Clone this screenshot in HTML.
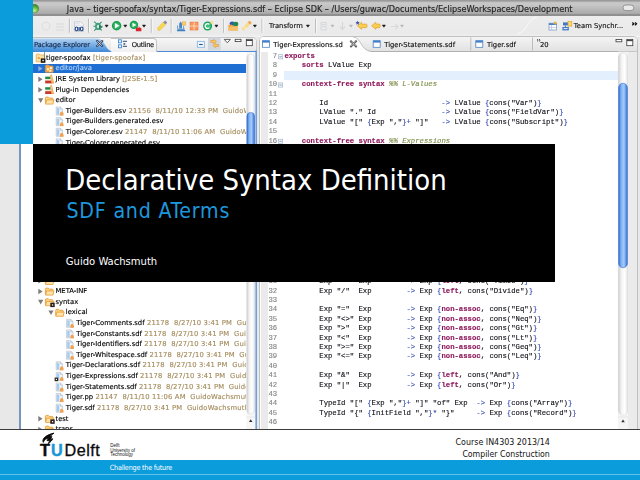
<!DOCTYPE html>
<html lang="en"><head><meta charset="utf-8"><title>Declarative Syntax Definition</title>
<style>
html,body{margin:0;padding:0}
body{width:640px;height:480px;overflow:hidden;position:relative;background:#fff;font-family:"DejaVu Sans","Liberation Sans",sans-serif;}
div,span,svg{position:absolute;box-sizing:border-box}
#shot .row,#shot .tt,#titletext{-webkit-text-stroke:0.14px currentColor}
#shot .cl,#shot .ln{-webkit-text-stroke:0.14px currentColor}
#shot{left:0;top:0;width:640px;height:430px;overflow:hidden;background:#e8e8e8;filter:blur(0.4px)}
#titlebar{left:0;top:0;width:640px;height:15.5px;background:linear-gradient(#999 0,#9b9b9b 7%,#c2c2c2 13%,#c9c9c9 25%,#ababab 84%,#919191 88%,#8e8e8e 100%)}
#titletext{left:66.8px;top:3.8px;font-size:8.13px;line-height:11px;color:#222;white-space:pre;letter-spacing:0px}
#toolbar{left:0;top:15.5px;width:640px;height:21px;background:linear-gradient(#ededed,#eaeaea 85%,#f2f2f2)}
.tt{font-size:6.8px;line-height:10px;color:#111;white-space:pre}
#pe{left:18.8px;top:36.5px;width:238px;height:400px;background:#fff;border:1px solid #c2c2c2;border-left:2px solid #7596be;border-right:1.3px solid #c6c6c6;border-radius:4px 5px 0 0;overflow:hidden}
#pehead{left:0;top:0;width:236px;height:14.5px;background:linear-gradient(#f6f6f6,#e6e6e6);border-bottom:1.9px solid #4b8bd6}
#petab{left:0;top:0;width:100px;height:14.5px}
#tree{left:0;top:14.5px;width:225.6px;height:390px;overflow:hidden}
.row{left:0;height:10.67px;width:400px;white-space:pre;font-size:6.8px;line-height:10.67px;color:#000}
.row .t{top:0;white-space:pre}
.dec{color:#a58d5e;letter-spacing:0.16px}
.sel{left:0;width:224.8px;height:9.4px;background:#1f6fd3}
#ed{left:259px;top:36.4px;width:379px;height:400px;background:#fff;border:1px solid #c0c0c0;border-radius:5px 5px 0 0;overflow:hidden}
#edhead{left:0;top:0;width:378px;height:14.5px;background:linear-gradient(#f4f4f4,#e2e2e2);border-bottom:1px solid #b0b0b0}
#code{left:0;top:14.5px;width:358px;height:380px;overflow:hidden}
.ln{left:0;width:17.2px;text-align:right;color:#868686;font-family:"Liberation Mono","DejaVu Sans Mono",monospace;font-size:7.28px;line-height:9.385px;height:9.385px;white-space:pre}
.cl{left:24.4px;color:#101018;font-family:"Liberation Mono","DejaVu Sans Mono",monospace;font-size:7.28px;line-height:9.385px;height:9.385px;white-space:pre}
.k{color:#8e1a5c;font-weight:bold;position:static}
.o{color:#3a4fb8;position:static}
.c{color:#7f8f4a;font-style:italic;position:static}
#strip{left:0;top:0;width:33.2px;height:143.8px;background:#0b9cdc}
#box{left:33.2px;top:143.8px;width:522px;height:138.4px;background:#000}
#ttl{left:65.2px;top:159.7px;font-family:"DejaVu Sans Condensed","Liberation Sans",sans-serif;font-size:28.93px;line-height:40px;color:#fff;white-space:pre}
#sub{left:66.5px;top:195.8px;font-family:"DejaVu Sans Condensed","Liberation Sans",sans-serif;font-size:21.2px;line-height:30px;color:#1e97de;white-space:pre;letter-spacing:0.77px}
#auth{left:65.8px;top:252.9px;font-family:"DejaVu Sans Condensed","Liberation Sans",sans-serif;font-size:11.15px;line-height:18px;color:#fff;white-space:pre}
#foot{left:0;top:429px;width:640px;height:51px;background:#fff;border-top:1px solid #3c3c3c}
#band{left:0;top:460.3px;width:640px;height:19.7px;background:#0b9cdc}
#bandline{left:0;top:473.9px;width:640px;height:1px;background:#63c0ec}
#ctf{left:109.8px;top:462.9px;font-family:"DejaVu Sans Condensed","Liberation Sans",sans-serif;font-size:7.2px;line-height:9px;letter-spacing:-0.22px;color:#fff;white-space:pre}
.fr{right:90.2px;font-family:"DejaVu Sans Condensed","Liberation Sans",sans-serif;line-height:12px;color:#111;white-space:pre;text-align:right}
</style></head>
<body>
<div id="shot">
<div id="titlebar"></div>
<div id="titletext">Java – tiger-spoofax/syntax/Tiger-Expressions.sdf – Eclipse SDK – /Users/guwac/Documents/EclipseWorkspaces/Development</div>
<div id="toolbar"></div>
<div class="tt" style="left:269px;top:20.5px">Transform</div>
<div class="tt" style="left:573.8px;top:20.5px">Team Synchr...</div>
<div id="pe">
<div id="pehead"></div>
<div style="left:90px;top:0.5px;width:46.5px;height:14px;background:linear-gradient(#fdfdfd,#f0f0f0);border:1px solid #c4c4c4;border-bottom:none;border-left:none;border-radius:0 4px 0 0"></div>
<svg id="petab" width="110" height="15" viewBox="0 0 110 15"><defs><linearGradient id="g1" x1="0" y1="0" x2="0" y2="1"><stop offset="0" stop-color="#b4d2f2"/><stop offset="1" stop-color="#3f8bd9"/></linearGradient></defs><path d="M0 0 H84 C92.5 0 92.5 14.5 102 14.5 H0 Z" fill="url(#g1)"/></svg>
<div class="tt" style="left:13.2px;top:2.4px;color:#16294a;letter-spacing:-0.17px">Package Explorer</div>
<div class="tt" style="left:111px;top:2.4px;color:#111;letter-spacing:-0.35px">Outline</div>
<div id="tree">
<div class="row" style="top:0.69px"><span class="t" style="left:25.2px"><span style="position:static">tiger-spoofax</span><span class="dec" style="position:static"> [tiger-spoofax]</span></span></div>
<div class="sel" style="top:11.56px"></div>
<div class="row" style="top:11.31px"><span class="t" style="left:34.7px"><span style="position:static;color:#b4d3f7">editor/java</span></span></div>
<div class="row" style="top:21.92px"><span class="t" style="left:34.7px"><span style="position:static">JRE System Library</span><span class="dec" style="position:static"> [J2SE-1.5]</span></span></div>
<div class="row" style="top:32.53px"><span class="t" style="left:34.7px"><span style="position:static">Plug-in Dependencies</span></span></div>
<div class="row" style="top:43.15px"><span class="t" style="left:34.7px"><span style="position:static">editor</span></span></div>
<div class="row" style="top:53.76px"><span class="t" style="left:45.0px"><span style="position:static">Tiger-Builders.esv</span><span class="dec" style="position:static"> 21156  8/11/10 12:33 PM  GuidoWachsmuth</span></span></div>
<div class="row" style="top:64.37px"><span class="t" style="left:45.0px"><span style="position:static">Tiger-Builders.generated.esv</span></span></div>
<div class="row" style="top:74.98px"><span class="t" style="left:45.0px"><span style="position:static">Tiger-Colorer.esv</span><span class="dec" style="position:static"> 21147  8/11/10 11:06 AM  GuidoWachsmuth</span></span></div>
<div class="row" style="top:85.60px"><span class="t" style="left:45.0px"><span style="position:static">Tiger-Colorer.generated.esv</span></span></div>
<div class="row" style="top:223.57px"><span class="t" style="left:34.7px"><span style="position:static"></span></span></div>
<div class="row" style="top:234.18px"><span class="t" style="left:34.7px"><span style="position:static">META-INF</span></span></div>
<div class="row" style="top:244.79px"><span class="t" style="left:34.7px"><span style="position:static">syntax</span></span></div>
<div class="row" style="top:255.41px"><span class="t" style="left:45.0px"><span style="position:static">lexical</span></span></div>
<div class="row" style="top:266.02px"><span class="t" style="left:55.4px"><span style="position:static">Tiger-Comments.sdf</span><span class="dec" style="position:static"> 21178  8/27/10 3:41 PM  GuidoWachsmuth</span></span></div>
<div class="row" style="top:276.63px"><span class="t" style="left:55.4px"><span style="position:static">Tiger-Constants.sdf</span><span class="dec" style="position:static"> 21178  8/27/10 3:41 PM  GuidoWachsmuth</span></span></div>
<div class="row" style="top:287.24px"><span class="t" style="left:55.4px"><span style="position:static">Tiger-Identifiers.sdf</span><span class="dec" style="position:static"> 21178  8/27/10 3:41 PM  GuidoWachsmuth</span></span></div>
<div class="row" style="top:297.86px"><span class="t" style="left:55.4px"><span style="position:static">Tiger-Whitespace.sdf</span><span class="dec" style="position:static"> 21178  8/27/10 3:41 PM  GuidoWachsmuth</span></span></div>
<div class="row" style="top:308.47px"><span class="t" style="left:45.0px"><span style="position:static">Tiger-Declarations.sdf</span><span class="dec" style="position:static"> 21178  8/27/10 3:41 PM  GuidoWachsmuth</span></span></div>
<div class="row" style="top:319.08px"><span class="t" style="left:45.0px"><span style="position:static">Tiger-Expressions.sdf</span><span class="dec" style="position:static"> 21178  8/27/10 3:41 PM  GuidoWachsmuth</span></span></div>
<div class="row" style="top:329.70px"><span class="t" style="left:45.0px"><span style="position:static">Tiger-Statements.sdf</span><span class="dec" style="position:static"> 21178  8/27/10 3:41 PM  GuidoWachsmuth</span></span></div>
<div class="row" style="top:340.31px"><span class="t" style="left:45.0px"><span style="position:static">Tiger.pp</span><span class="dec" style="position:static"> 21147  8/11/10 11:06 AM  GuidoWachsmuth</span></span></div>
<div class="row" style="top:350.92px"><span class="t" style="left:45.0px"><span style="position:static">Tiger.sdf</span><span class="dec" style="position:static"> 21178  8/27/10 3:41 PM  GuidoWachsmuth</span></span></div>
<div class="row" style="top:361.54px"><span class="t" style="left:34.7px"><span style="position:static">test</span></span></div>
<div class="row" style="top:372.15px"><span class="t" style="left:34.7px"><span style="position:static">trans</span></span></div>
</div>
</div>
<div id="ed">
<div id="edhead"></div>
<svg style="left:0;top:0" width="130" height="15" viewBox="0 0 130 15"><path d="M0 15 V0 H93 C101 0 101 14.5 111 14.5 V15 Z" fill="#fff"/><path d="M93 0 C101 0 101 14.2 111 14.2" fill="none" stroke="#b4b4b4" stroke-width="0.8"/></svg>
<div class="tt" style="left:13.3px;top:2.2px">Tiger-Expressions.sd</div>
<div class="tt" style="left:124.2px;top:2.2px">Tiger-Statements.sdf</div>
<div class="tt" style="left:227px;top:2.2px">Tiger.sdf</div>
<div class="tt" style="left:280px;top:2.6px">20</div>
<div id="code">
<div style="left:1.2px;top:0.4px;width:6.8px;height:380px;background:#eaeaea"></div>
<div class="ln" style="top:0.21px">7</div><div class="cl" style="top:0.21px"><span class="k">exports</span></div>
<div class="ln" style="top:9.59px">8</div><div class="cl" style="top:9.59px">    <span class="k">sorts</span> LValue Exp</div>
<div style="left:23.5px;top:19.18px;width:334.5px;height:8.6px;background:#e4effd"></div>
<div class="ln" style="top:18.98px">9</div>
<div class="ln" style="top:28.36px">10</div><div class="cl" style="top:28.36px">    <span class="k">context-free syntax</span> <span class="c">%% L-Values</span></div>
<div class="ln" style="top:37.75px">11</div>
<div class="ln" style="top:47.13px">12</div><div class="cl" style="top:47.13px">        Id                          <span class="o">-&gt;</span> LValue <span class="o">{</span>cons("Var")<span class="o">}</span></div>
<div class="ln" style="top:56.52px">13</div><div class="cl" style="top:56.52px">        LValue "." Id               <span class="o">-&gt;</span> LValue <span class="o">{</span>cons("FieldVar")<span class="o">}</span></div>
<div class="ln" style="top:65.90px">14</div><div class="cl" style="top:65.90px">        LValue "[" <span class="o">{</span>Exp ","<span class="o">}+</span> "]"   <span class="o">-&gt;</span> LValue <span class="o">{</span>cons("Subscript")<span class="o">}</span></div>
<div class="ln" style="top:75.29px">15</div>
<div class="ln" style="top:84.67px">16</div><div class="cl" style="top:84.67px">    <span class="k">context-free syntax</span> <span class="c">%% Expressions</span></div>
<div class="ln" style="top:94.06px">17</div>
<div class="ln" style="top:103.44px">18</div>
<div class="ln" style="top:112.83px">19</div>
<div class="ln" style="top:122.21px">20</div>
<div class="ln" style="top:131.60px">21</div>
<div class="ln" style="top:140.98px">22</div>
<div class="ln" style="top:150.37px">23</div>
<div class="ln" style="top:159.75px">24</div>
<div class="ln" style="top:169.14px">25</div>
<div class="ln" style="top:178.52px">26</div>
<div class="ln" style="top:187.91px">27</div>
<div class="ln" style="top:197.29px">28</div>
<div class="ln" style="top:206.68px">29</div>
<div class="ln" style="top:216.06px">30</div>
<div class="ln" style="top:225.45px">31</div><div class="cl" style="top:225.45px">        Exp "*"  Exp        <span class="o">-&gt;</span> Exp <span class="o">{</span><span class="k">left</span>, cons("Times")<span class="o">}</span></div>
<div class="ln" style="top:234.83px">32</div><div class="cl" style="top:234.83px">        Exp "/"  Exp        <span class="o">-&gt;</span> Exp <span class="o">{</span><span class="k">left</span>, cons("Divide")<span class="o">}</span></div>
<div class="ln" style="top:244.22px">33</div>
<div class="ln" style="top:253.60px">34</div><div class="cl" style="top:253.60px">        Exp "="  Exp        <span class="o">-&gt;</span> Exp <span class="o">{</span><span class="k">non-assoc</span>, cons("Eq")<span class="o">}</span></div>
<div class="ln" style="top:262.99px">35</div><div class="cl" style="top:262.99px">        Exp "&lt;&gt;" Exp        <span class="o">-&gt;</span> Exp <span class="o">{</span><span class="k">non-assoc</span>, cons("Neq")<span class="o">}</span></div>
<div class="ln" style="top:272.37px">36</div><div class="cl" style="top:272.37px">        Exp "&gt;"  Exp        <span class="o">-&gt;</span> Exp <span class="o">{</span><span class="k">non-assoc</span>, cons("Gt")<span class="o">}</span></div>
<div class="ln" style="top:281.76px">37</div><div class="cl" style="top:281.76px">        Exp "&lt;"  Exp        <span class="o">-&gt;</span> Exp <span class="o">{</span><span class="k">non-assoc</span>, cons("Lt")<span class="o">}</span></div>
<div class="ln" style="top:291.14px">38</div><div class="cl" style="top:291.14px">        Exp "&gt;=" Exp        <span class="o">-&gt;</span> Exp <span class="o">{</span><span class="k">non-assoc</span>, cons("Geq")<span class="o">}</span></div>
<div class="ln" style="top:300.53px">39</div><div class="cl" style="top:300.53px">        Exp "&lt;=" Exp        <span class="o">-&gt;</span> Exp <span class="o">{</span><span class="k">non-assoc</span>, cons("Leq")<span class="o">}</span></div>
<div class="ln" style="top:309.91px">40</div>
<div class="ln" style="top:319.30px">41</div><div class="cl" style="top:319.30px">        Exp "&amp;"  Exp        <span class="o">-&gt;</span> Exp <span class="o">{</span><span class="k">left</span>, cons("And")<span class="o">}</span></div>
<div class="ln" style="top:328.68px">42</div><div class="cl" style="top:328.68px">        Exp "|"  Exp        <span class="o">-&gt;</span> Exp <span class="o">{</span><span class="k">left</span>, cons("Or")<span class="o">}</span></div>
<div class="ln" style="top:338.07px">43</div>
<div class="ln" style="top:347.45px">44</div><div class="cl" style="top:347.45px">        TypeId "[" <span class="o">{</span>Exp ","<span class="o">}+</span> "]" "of" Exp  <span class="o">-&gt;</span> Exp <span class="o">{</span>cons("Array")<span class="o">}</span></div>
<div class="ln" style="top:356.84px">45</div><div class="cl" style="top:356.84px">        TypeId "{" <span class="o">{</span>InitField ","<span class="o">}*</span> "}"     <span class="o">-&gt;</span> Exp <span class="o">{</span>cons("Record")<span class="o">}</span></div>
<div class="ln" style="top:366.22px">46</div>
<div class="ln" style="top:375.61px">47</div><div class="cl" style="top:375.61px">        Id LValue                   <span class="o">-&gt;</span> Exp <span class="o">{</span>cons("InitField")<span class="o">}</span></div>
</div>
</div>
<svg id="ov" style="left:0;top:0" width="640" height="430" viewBox="0 0 640 430"><defs><linearGradient id="trk" x1="0" y1="0" x2="1" y2="0"><stop offset="0" stop-color="#cfcfcf"/><stop offset="0.35" stop-color="#f4f4f4"/><stop offset="0.7" stop-color="#ffffff"/><stop offset="1" stop-color="#e3e3e3"/></linearGradient><linearGradient id="thb" x1="0" y1="0" x2="1" y2="0"><stop offset="0" stop-color="#2f6fd8"/><stop offset="0.3" stop-color="#7fb2f6"/><stop offset="0.6" stop-color="#a7cbfa"/><stop offset="1" stop-color="#2f6fd8"/></linearGradient></defs><rect x="255.4" y="50.5" width="1.4" height="380" fill="#5f96dc"/><rect x="246.4" y="52" width="8.6" height="378" fill="#f6f6f6"/><rect x="246.8" y="54" width="7.8" height="360" rx="3.9" fill="url(#trk)" stroke="#cfcfcf" stroke-width="0.4"/><rect x="246.9" y="112.4" width="7.6" height="160" rx="3.8" fill="url(#thb)" stroke="#2a5fc0" stroke-width="0.5"/><path d="M248.9 422 L250.7 419.2 L252.5 422 Z" fill="#333"/><path d="M246.6 417 H255" stroke="#d8d8d8" stroke-width="0.5"/><rect x="618" y="51.6" width="10" height="378" fill="#f4f4f4"/><rect x="618.4" y="53" width="9.2" height="362" rx="4.6" fill="url(#trk)" stroke="#d0d0d0" stroke-width="0.4"/><rect x="618.6" y="83.3" width="8.8" height="184.5" rx="4.4" fill="url(#thb)" stroke="#2a5fc0" stroke-width="0.5"/><path d="M621.2 422.2 L623 419.4 L624.8 422.2 Z" fill="#333"/><path d="M618 417 H628" stroke="#d8d8d8" stroke-width="0.5"/><rect x="628" y="51.6" width="9" height="378" fill="#ebebeb"/><rect x="68.9" y="18.8" width="1" height="14" fill="#b9b9b9"/><rect x="69.9" y="18.8" width="1" height="14" fill="#f8f8f8"/><rect x="88.0" y="18.8" width="1" height="14" fill="#b9b9b9"/><rect x="89.0" y="18.8" width="1" height="14" fill="#f8f8f8"/><rect x="150.8" y="18.8" width="1" height="14" fill="#b9b9b9"/><rect x="151.8" y="18.8" width="1" height="14" fill="#f8f8f8"/><rect x="170.7" y="18.8" width="1" height="14" fill="#b9b9b9"/><rect x="171.7" y="18.8" width="1" height="14" fill="#f8f8f8"/><rect x="223.2" y="18.8" width="1" height="14" fill="#b9b9b9"/><rect x="224.2" y="18.8" width="1" height="14" fill="#f8f8f8"/><rect x="261.5" y="18.8" width="1" height="14" fill="#b9b9b9"/><rect x="262.5" y="18.8" width="1" height="14" fill="#f8f8f8"/><rect x="315.1" y="18.8" width="1" height="14" fill="#b9b9b9"/><rect x="316.1" y="18.8" width="1" height="14" fill="#f8f8f8"/><path d="M537 17 C527 18.5 528 32 517 33.8" stroke="#f7f7f7" stroke-width="1.1" fill="none"/><circle cx="46" cy="26" r="3.8" fill="none" stroke="#e1e1e1" stroke-width="1.4"/><path d="M56 24 H64 M56 27 H64 M56 30 H64" stroke="#e0e0e0" stroke-width="1.3"/><g transform="translate(74.20 21.50)"><path d="M0.4 0.4 H6.4 L9 3 V10 H0.4 Z" fill="#fbfbfb" stroke="#b9bec6" stroke-width="0.7"/><path d="M1.2 2.2 H5.5 M1.2 3.8 H7" stroke="#c9d3e0" stroke-width="0.7"/><ellipse cx="2.3" cy="7.4" rx="1.3" ry="1.9" fill="none" stroke="#1c3f8a" stroke-width="1.1"/><path d="M4.9 5.4 V9.4" stroke="#1c3f8a" stroke-width="1.2"/><ellipse cx="7.5" cy="7.4" rx="1.3" ry="1.9" fill="none" stroke="#1c3f8a" stroke-width="1.1"/></g><g transform="translate(98.00 26.20)"><path d="M-3.8 -4.6 L-1 -2 M3.6 -4.4 L1.2 -2 M-4.6 0 H4.6 M-3.8 4.4 L-1.2 2 M3.8 4.2 L1.2 2" stroke="#2f8f70" stroke-width="1.1"/><ellipse cx="0" cy="0.2" rx="2.9" ry="3.7" fill="#3f9f7c"/><ellipse cx="0.1" cy="0.4" rx="1.3" ry="1.8" fill="#cfeadc"/><path d="M1 -1.5 L4.6 1 L1 3.4 Z" fill="#2d7f62"/></g><g transform="translate(106.60 26.00)"><path d="M-1.5 -0.9 H1.5 L0 1.2 Z" fill="#1a1a1a" stroke="#1a1a1a" stroke-width="0.6" stroke-linejoin="round"/></g><g transform="translate(125.30 26.00)"><path d="M-1.5 -0.9 H1.5 L0 1.2 Z" fill="#1a1a1a" stroke="#1a1a1a" stroke-width="0.6" stroke-linejoin="round"/></g><g transform="translate(144.00 26.00)"><path d="M-1.5 -0.9 H1.5 L0 1.2 Z" fill="#1a1a1a" stroke="#1a1a1a" stroke-width="0.6" stroke-linejoin="round"/></g><g transform="translate(216.40 26.00)"><path d="M-1.5 -0.9 H1.5 L0 1.2 Z" fill="#1a1a1a" stroke="#1a1a1a" stroke-width="0.6" stroke-linejoin="round"/></g><g transform="translate(254.90 26.00)"><path d="M-1.5 -0.9 H1.5 L0 1.2 Z" fill="#1a1a1a" stroke="#1a1a1a" stroke-width="0.6" stroke-linejoin="round"/></g><g transform="translate(307.90 26.00)"><path d="M-1.5 -0.9 H1.5 L0 1.2 Z" fill="#1a1a1a" stroke="#1a1a1a" stroke-width="0.6" stroke-linejoin="round"/></g><g transform="translate(383.90 26.00)"><path d="M-1.5 -0.9 H1.5 L0 1.2 Z" fill="#1a1a1a" stroke="#1a1a1a" stroke-width="0.6" stroke-linejoin="round"/></g><g transform="translate(332.50 26.00)"><path d="M-1.5 -0.9 H1.5 L0 1.2 Z" fill="#b8b8b8" stroke="#b8b8b8" stroke-width="0.6" stroke-linejoin="round"/></g><g transform="translate(351.00 26.00)"><path d="M-1.5 -0.9 H1.5 L0 1.2 Z" fill="#b8b8b8" stroke="#b8b8b8" stroke-width="0.6" stroke-linejoin="round"/></g><g transform="translate(402.00 26.00)"><path d="M-1.5 -0.9 H1.5 L0 1.2 Z" fill="#b8b8b8" stroke="#b8b8b8" stroke-width="0.6" stroke-linejoin="round"/></g><circle cx="116.6" cy="25.7" r="4.7" fill="#169a4c"/><circle cx="116.6" cy="25.7" r="3.5" fill="#2cb463"/><path d="M114.9 23 L119.6 25.7 L114.9 28.4 Z" fill="#fff"/><circle cx="133.9" cy="24.9" r="4.2" fill="#169a4c"/><circle cx="133.9" cy="24.9" r="3" fill="#2cb463"/><path d="M132.5 22.7 L136.4 24.9 L132.5 27.1 Z" fill="#fff"/><rect x="135.8" y="28" width="5.6" height="3.3" rx="0.6" fill="#d8262c"/><path d="M137.4 28 v-0.8 h2.4 v0.8" fill="none" stroke="#d8262c" stroke-width="0.7"/><path d="M158 30.2 L157.6 28 L163.2 22.2 L165.6 24.6 L160 30.4 Z" fill="#f6d84a" stroke="#e4b93a" stroke-width="0.5"/><path d="M163.2 22.2 L165.2 20.4 L167.2 22.6 L165.6 24.6 Z" fill="#8d8d96"/><g transform="translate(176.00 21.00)"><path d="M1 9.6 H9.2 M1.4 8.2 H8.6" stroke="#3f7fc0" stroke-width="1.1"/><path d="M3.2 2.4 L4.8 0.6 L6 2.4 V7.6 H3.2 Z" fill="#4a86c6"/><path d="M1.6 4.4 V8 M7.6 4.8 V8" stroke="#6aa2d6" stroke-width="1"/><path d="M6.4 0.8 H9.6 V4.2 H6.4 Z" fill="#f8d067" stroke="#e7a83c" stroke-width="0.6"/></g><g transform="translate(189.80 21.80)"><rect x="0.3" y="0.3" width="7.9" height="7.9" fill="#f58a4a" stroke="#e8733a" stroke-width="0.6"/><path d="M4.25 0.3 V8.2 M0.3 4.25 H8.2" stroke="#fde2c6" stroke-width="1"/><path d="M2.2 0.5 V8 M6.3 0.5 V8 M0.5 2.2 H8 M0.5 6.3 H8" stroke="#f9b184" stroke-width="0.5"/></g><circle cx="207.6" cy="26" r="4.5" fill="#17a05a"/><circle cx="207.6" cy="26" r="3.3" fill="#3cc07c"/><path d="M209.4 24.4 A2.4 2.4 0 1 0 209.4 27.6" fill="none" stroke="#fff" stroke-width="1.3"/><rect x="210.4" y="21.2" width="2.4" height="2.4" fill="#f6d978"/><g transform="translate(228.00 21.00)"><ellipse cx="4.2" cy="2.6" rx="2.6" ry="2.2" fill="#3a50b4"/><ellipse cx="7.6" cy="3" rx="2.7" ry="2.3" fill="#218a4a"/><path d="M0.4 3.8 H4 L5.2 5 H10 V9.4 H0.4 Z" fill="#f3a446"/><path d="M0.4 6 L10 5.2 V9.4 H0.4 Z" fill="#f8c06a"/></g><path d="M242.4 30 L242 28 L247.6 22.4 L250 24.8 L244.4 30.4 Z" fill="#f9dc8a"/><path d="M247.6 22.4 L249.6 20.6 L251.8 22.8 L250 24.8 Z" fill="#f0a95a"/><path d="M244 26.6 L246.4 29" stroke="#fff" stroke-width="0.8"/><path d="M321 22.5 H326 V30 H321 Z M322 24.5 H325 M322 26.5 H325" fill="none" stroke="#d3d6da" stroke-width="0.9"/><path d="M342.5 22 V28.5 M340 26.5 L342.5 29.5 L345 26.5" fill="none" stroke="#d3d6da" stroke-width="1.1"/><path d="M391 26.5 H398 M395.5 24 L398 26.5 L395.5 29" fill="none" stroke="#d9d9d9" stroke-width="1.1"/><g transform="translate(357.40 25.80)"><path d="M0 0 L4.2 -3.6 V-1.7 H8.6 Q9.6 -1.7 9.6 -0.7 V0.9 Q9.6 1.9 8.6 1.9 H4.2 V3.6 Z" fill="#f9cf52" stroke="#e1a233" stroke-width="0.7" stroke-linejoin="round"/></g><g transform="translate(371.60 25.80)"><path d="M0 0 L4.2 -3.6 V-1.7 H7.6 Q8.6 -1.7 8.6 -0.7 V0.9 Q8.6 1.9 7.6 1.9 H4.2 V3.6 Z" fill="#f9cf52" stroke="#e1a233" stroke-width="0.7" stroke-linejoin="round"/></g><path d="M357.6 20.8 l0.7 1.3 1.4 0.2 -1 1 0.2 1.4 -1.3 -0.7 -1.3 0.7 0.2 -1.4 -1 -1 1.4 -0.2z" fill="#3a5aa8"/><g transform="translate(548.60 21.80)"><rect x="0.4" y="1.4" width="7.6" height="6.8" fill="#fff" stroke="#7f9cc4" stroke-width="0.8"/><rect x="0.4" y="1.4" width="7.6" height="1.8" fill="#4a80c8"/><path d="M3 3.2 V8.2 M0.4 5.6 H8" stroke="#9ab4d6" stroke-width="0.6"/><path d="M6.6 -0.4 v3.4 M4.9 1.3 h3.4" stroke="#e8b030" stroke-width="1.1"/></g><g transform="translate(562.00 21.20)"><rect x="1" y="1.2" width="5" height="3" fill="#3f78c4"/><rect x="0.4" y="5.8" width="6.4" height="3.4" fill="#3f78c4"/><path d="M3.4 4.2 V5.8" stroke="#3f78c4" stroke-width="1"/><rect x="1.6" y="6.8" width="4" height="1.1" fill="#dbe8f6"/><rect x="6" y="0.3" width="3.8" height="4.6" fill="#f8d878" stroke="#e3a534" stroke-width="0.7"/></g><path d="M632.3 22.4 l1.5 1.4 -1.5 1.4 M635 22.4 l1.5 1.4 -1.5 1.4" fill="none" stroke="#111" stroke-width="1.3"/><defs><radialGradient id="gb" cx="0.5" cy="0.75" r="0.7"><stop offset="0" stop-color="#c9f08f"/><stop offset="0.6" stop-color="#5fb43a"/><stop offset="1" stop-color="#3b7f27"/></radialGradient></defs><circle cx="34.4" cy="8.6" r="4.3" fill="url(#gb)" stroke="#4c7a35" stroke-width="0.5"/><rect x="623" y="5" width="10.8" height="5.6" rx="2.8" fill="#e9e9e9" stroke="#7a7a7a" stroke-width="0.7"/><g transform="translate(96.20 40.00)"><path d="M1 1 L6 6 M6 1 L1 6" stroke="#1c2d4a" stroke-width="1.9" stroke-linecap="square"/><path d="M1.2 1.2 L5.8 5.8 M5.8 1.2 L1.2 5.8" stroke="#fff" stroke-width="0.8" stroke-linecap="square"/></g><g transform="translate(118.00 39.40)"><rect x="0.4" y="0.4" width="3" height="3" fill="#e8f2fc" stroke="#2f7fd0" stroke-width="0.8"/><rect x="0.4" y="5.4" width="3" height="3" fill="#e8f2fc" stroke="#2f7fd0" stroke-width="0.8"/><path d="M4.8 1.9 H9 M4.8 6.9 H9" stroke="#1d3a66" stroke-width="0.9"/><path d="M5.6 3.4 L7.8 4.5 L5.6 5.6 Z" fill="#1d3a66"/></g><g transform="translate(196.90 40.90)"><rect x="0.5" y="0.5" width="7" height="6" fill="#f2f8fd" stroke="#8fc0e6" stroke-width="1"/><path d="M2.2 3.6 H5.8" stroke="#27508c" stroke-width="1.1"/></g><rect x="208" y="37.4" width="12.6" height="13" fill="#cfd6e0"/><g transform="translate(210.40 39.40)"><path d="M0.4 1.2 H3.4 V0 L6 2.1 L3.4 4.2 V3 H0.4 Z" fill="#f9cf62" stroke="#e89a30" stroke-width="0.7" stroke-linejoin="round"/><path d="M8 5.2 H5 V4 L2.4 6.1 L5 8.2 V7 H8 Z" fill="#f9cf62" stroke="#e89a30" stroke-width="0.7" stroke-linejoin="round"/></g><path d="M224.2 39.4 H230.4 L227.3 42.8 Z" fill="#fff" stroke="#3a3a3a" stroke-width="0.8" stroke-linejoin="round"/><rect x="235.2" y="39.3" width="5.8" height="2.3" fill="#fff" stroke="#3a3a3a" stroke-width="0.8"/><rect x="246.3" y="39.3" width="6" height="6.4" fill="#fff" stroke="#3a3a3a" stroke-width="0.8"/><path d="M246.3 40.4 H252.3" stroke="#3a3a3a" stroke-width="1.1"/><g transform="translate(262.00 40.30)"><rect x="0.4" y="0.4" width="7" height="6.6" fill="#fff" stroke="#4a82c4" stroke-width="0.8"/><rect x="0.4" y="0.4" width="7" height="1.9" fill="#3f7fcf"/></g><g transform="translate(350.00 40.40)"><path d="M1 1 L6 6 M6 1 L1 6" stroke="#333" stroke-width="1.9" stroke-linecap="square"/><path d="M1.2 1.2 L5.8 5.8 M5.8 1.2 L1.2 5.8" stroke="#fff" stroke-width="0.8" stroke-linecap="square"/></g><g transform="translate(372.80 40.30)"><rect x="0.4" y="0.4" width="7" height="6.6" fill="#fff" stroke="#4a82c4" stroke-width="0.8"/><rect x="0.4" y="0.4" width="7" height="1.9" fill="#3f7fcf"/></g><g transform="translate(475.40 40.30)"><rect x="0.4" y="0.4" width="7" height="6.6" fill="#fff" stroke="#4a82c4" stroke-width="0.8"/><rect x="0.4" y="0.4" width="7" height="1.9" fill="#3f7fcf"/></g><path d="M470.8 37.5 V50.5 M532.5 37.5 V50.5" stroke="#b8b8b8" stroke-width="0.9"/><path d="M537 39.2 l1.2 1.1 -1.2 1.1 M539 39.2 l1.2 1.1 -1.2 1.1" fill="none" stroke="#222" stroke-width="0.8"/><rect x="616" y="39.5" width="5.8" height="2.3" fill="#fff" stroke="#3a3a3a" stroke-width="0.8"/><rect x="626.8" y="39.5" width="6" height="6.2" fill="#fff" stroke="#3a3a3a" stroke-width="0.8"/><path d="M626.8 40.6 H632.8" stroke="#3a3a3a" stroke-width="1.1"/><g transform="translate(35.40 58.00)"><path d="M0.8 -3 Q0.8 -4 1.8 -4 H4 L5 -3 H8.4 Q9.2 -3 9.2 -2.2 V3.8 H0.8 Z" fill="#fbe3a6" stroke="#e8a850" stroke-width="0.8"/><path d="M2.4 -1 h2 v2 h-2z" fill="#f0a040"/><rect x="5.4" y="0.4" width="4.6" height="4.4" fill="#1e1a18"/><rect x="7" y="1.8" width="1.4" height="1.4" fill="#fff"/><rect x="8.9" y="-6" width="0.6" height="6" fill="#555"/></g><g transform="translate(44.90 68.60)"><path d="M0.5 -2.4 Q0.5 -3.6 1.6 -3.6 H3.6 L4.6 -2.6 H7.3 Q8.2 -2.6 8.2 -1.6 V3.6 H0.5 Z" fill="#f3a748" stroke="#e8953a" stroke-width="0.7"/><path d="M2 -0.4 h2.2 v2 h-2.2z M5 -1.6 h2 v2 h-2z M4.4 1.4 h2 v1.8 h-2z" fill="#fff3d6"/></g><g transform="translate(44.90 79.20)"><rect x="0.3" y="-2.6" width="5.4" height="2.6" fill="#1f8a4a"/><rect x="0.3" y="0" width="6" height="1.6" fill="#f4ead0"/><rect x="0.3" y="1.4" width="7" height="2.8" fill="#c8372a"/><path d="M5.2 -4.2 L7 -4.6 L9 3.4 L9 4.2 H6.6 Z" fill="#f0a040"/><path d="M6.4 -3.4 L7.4 3" stroke="#fbe2a8" stroke-width="0.7"/></g><g transform="translate(44.90 89.80)"><rect x="0.3" y="-2.6" width="5.4" height="2.6" fill="#1f8a4a"/><rect x="0.3" y="0" width="6" height="1.6" fill="#f4ead0"/><rect x="0.3" y="1.4" width="7" height="2.8" fill="#c8372a"/><path d="M5.2 -4.2 L7 -4.6 L9 3.4 L9 4.2 H6.6 Z" fill="#f0a040"/><path d="M6.4 -3.4 L7.4 3" stroke="#fbe2a8" stroke-width="0.7"/></g><g transform="translate(44.90 100.50)"><path d="M0.5 -2.2 Q0.5 -3.4 1.6 -3.4 H3.4 L4.4 -2.4 H7.3 Q8 -2.4 8 -1.6 V2.4 H0.5 Z" fill="#f9d488" stroke="#e5942c" stroke-width="0.8"/><path d="M1.8 -0.6 H9 L8 3.6 H0.6 Z" fill="#fde3a8" stroke="#e89a36" stroke-width="0.8" stroke-linejoin="round"/></g><g transform="translate(55.20 111.10)"><path d="M1 -4 H5.2 L7.4 -1.9 V4 H1 Z" fill="#f2f6fb" stroke="#a9b6c6" stroke-width="0.6"/><rect x="1.6" y="-3" width="2.5" height="6.4" fill="#a6cbec"/><path d="M5.2 -4 V-1.9 H7.4" fill="none" stroke="#a9b6c6" stroke-width="0.6"/><path d="M4.7 4.4 Q4.5 0.8 6.4 0.5 Q8.6 0.9 8.4 4.4 Z" fill="#f0a24e"/></g><g transform="translate(55.20 121.70)"><path d="M1 -4 H5.2 L7.4 -1.9 V4 H1 Z" fill="#f2f6fb" stroke="#a9b6c6" stroke-width="0.6"/><rect x="1.6" y="-3" width="2.5" height="6.4" fill="#a6cbec"/><path d="M5.2 -4 V-1.9 H7.4" fill="none" stroke="#a9b6c6" stroke-width="0.6"/><path d="M4.7 4.4 Q4.5 0.8 6.4 0.5 Q8.6 0.9 8.4 4.4 Z" fill="#f0a24e"/></g><g transform="translate(55.20 132.30)"><path d="M1 -4 H5.2 L7.4 -1.9 V4 H1 Z" fill="#f2f6fb" stroke="#a9b6c6" stroke-width="0.6"/><rect x="1.6" y="-3" width="2.5" height="6.4" fill="#a6cbec"/><path d="M5.2 -4 V-1.9 H7.4" fill="none" stroke="#a9b6c6" stroke-width="0.6"/><path d="M4.7 4.4 Q4.5 0.8 6.4 0.5 Q8.6 0.9 8.4 4.4 Z" fill="#f0a24e"/></g><g transform="translate(55.20 142.90)"><path d="M1 -4 H5.2 L7.4 -1.9 V4 H1 Z" fill="#f2f6fb" stroke="#a9b6c6" stroke-width="0.6"/><rect x="1.6" y="-3" width="2.5" height="6.4" fill="#a6cbec"/><path d="M5.2 -4 V-1.9 H7.4" fill="none" stroke="#a9b6c6" stroke-width="0.6"/><path d="M4.7 4.4 Q4.5 0.8 6.4 0.5 Q8.6 0.9 8.4 4.4 Z" fill="#f0a24e"/></g><g transform="translate(44.90 280.90)"><path d="M0.5 -2.2 Q0.5 -3.4 1.6 -3.4 H3.4 L4.4 -2.4 H7.3 Q8 -2.4 8 -1.6 V2.4 H0.5 Z" fill="#f9d488" stroke="#e5942c" stroke-width="0.8"/><path d="M1.8 -0.6 H9 L8 3.6 H0.6 Z" fill="#fde3a8" stroke="#e89a36" stroke-width="0.8" stroke-linejoin="round"/></g><g transform="translate(44.90 291.50)"><path d="M0.5 -2.2 Q0.5 -3.4 1.6 -3.4 H3.4 L4.4 -2.4 H7.3 Q8 -2.4 8 -1.6 V2.4 H0.5 Z" fill="#f9d488" stroke="#e5942c" stroke-width="0.8"/><path d="M1.8 -0.6 H9 L8 3.6 H0.6 Z" fill="#fde3a8" stroke="#e89a36" stroke-width="0.8" stroke-linejoin="round"/></g><g transform="translate(44.90 302.10)"><path d="M0.5 -2.2 Q0.5 -3.4 1.6 -3.4 H3.4 L4.4 -2.4 H7.3 Q8 -2.4 8 -1.6 V2.4 H0.5 Z" fill="#f9d488" stroke="#e5942c" stroke-width="0.8"/><path d="M1.8 -0.6 H9 L8 3.6 H0.6 Z" fill="#fde3a8" stroke="#e89a36" stroke-width="0.8" stroke-linejoin="round"/></g><g transform="translate(44.90 302.10)"><rect x="5.4" y="0.6" width="4.4" height="4.4" fill="#2a1a14"/><rect x="7" y="2.2" width="1.3" height="1.3" fill="#fff"/></g><g transform="translate(55.20 312.70)"><path d="M0.5 -2.2 Q0.5 -3.4 1.6 -3.4 H3.4 L4.4 -2.4 H7.3 Q8 -2.4 8 -1.6 V2.4 H0.5 Z" fill="#f9d488" stroke="#e5942c" stroke-width="0.8"/><path d="M1.8 -0.6 H9 L8 3.6 H0.6 Z" fill="#fde3a8" stroke="#e89a36" stroke-width="0.8" stroke-linejoin="round"/></g><g transform="translate(65.60 323.30)"><path d="M1 -4 H5.2 L7.4 -1.9 V4 H1 Z" fill="#f2f6fb" stroke="#a9b6c6" stroke-width="0.6"/><rect x="1.6" y="-3" width="2.5" height="6.4" fill="#a6cbec"/><path d="M5.2 -4 V-1.9 H7.4" fill="none" stroke="#a9b6c6" stroke-width="0.6"/><path d="M4.7 4.4 Q4.5 0.8 6.4 0.5 Q8.6 0.9 8.4 4.4 Z" fill="#f0a24e"/></g><g transform="translate(65.60 333.90)"><path d="M1 -4 H5.2 L7.4 -1.9 V4 H1 Z" fill="#f2f6fb" stroke="#a9b6c6" stroke-width="0.6"/><rect x="1.6" y="-3" width="2.5" height="6.4" fill="#a6cbec"/><path d="M5.2 -4 V-1.9 H7.4" fill="none" stroke="#a9b6c6" stroke-width="0.6"/><path d="M4.7 4.4 Q4.5 0.8 6.4 0.5 Q8.6 0.9 8.4 4.4 Z" fill="#f0a24e"/></g><g transform="translate(65.60 344.60)"><path d="M1 -4 H5.2 L7.4 -1.9 V4 H1 Z" fill="#f2f6fb" stroke="#a9b6c6" stroke-width="0.6"/><rect x="1.6" y="-3" width="2.5" height="6.4" fill="#a6cbec"/><path d="M5.2 -4 V-1.9 H7.4" fill="none" stroke="#a9b6c6" stroke-width="0.6"/><path d="M4.7 4.4 Q4.5 0.8 6.4 0.5 Q8.6 0.9 8.4 4.4 Z" fill="#f0a24e"/></g><g transform="translate(65.60 355.20)"><path d="M1 -4 H5.2 L7.4 -1.9 V4 H1 Z" fill="#f2f6fb" stroke="#a9b6c6" stroke-width="0.6"/><rect x="1.6" y="-3" width="2.5" height="6.4" fill="#a6cbec"/><path d="M5.2 -4 V-1.9 H7.4" fill="none" stroke="#a9b6c6" stroke-width="0.6"/><path d="M4.7 4.4 Q4.5 0.8 6.4 0.5 Q8.6 0.9 8.4 4.4 Z" fill="#f0a24e"/></g><g transform="translate(55.20 365.80)"><path d="M1 -4 H5.2 L7.4 -1.9 V4 H1 Z" fill="#f2f6fb" stroke="#a9b6c6" stroke-width="0.6"/><rect x="1.6" y="-3" width="2.5" height="6.4" fill="#a6cbec"/><path d="M5.2 -4 V-1.9 H7.4" fill="none" stroke="#a9b6c6" stroke-width="0.6"/><path d="M4.7 4.4 Q4.5 0.8 6.4 0.5 Q8.6 0.9 8.4 4.4 Z" fill="#f0a24e"/></g><g transform="translate(55.20 376.40)"><path d="M1 -4 H5.2 L7.4 -1.9 V4 H1 Z" fill="#f2f6fb" stroke="#a9b6c6" stroke-width="0.6"/><rect x="1.6" y="-3" width="2.5" height="6.4" fill="#a6cbec"/><path d="M5.2 -4 V-1.9 H7.4" fill="none" stroke="#a9b6c6" stroke-width="0.6"/><path d="M4.7 4.4 Q4.5 0.8 6.4 0.5 Q8.6 0.9 8.4 4.4 Z" fill="#f0a24e"/></g><g transform="translate(55.20 376.40)"><rect x="-0.6" y="1.2" width="3.6" height="3.6" fill="#2a2420"/><rect x="0.6" y="2.4" width="1.2" height="1.2" fill="#fff"/></g><g transform="translate(55.20 387.00)"><path d="M1 -4 H5.2 L7.4 -1.9 V4 H1 Z" fill="#f2f6fb" stroke="#a9b6c6" stroke-width="0.6"/><rect x="1.6" y="-3" width="2.5" height="6.4" fill="#a6cbec"/><path d="M5.2 -4 V-1.9 H7.4" fill="none" stroke="#a9b6c6" stroke-width="0.6"/><path d="M4.7 4.4 Q4.5 0.8 6.4 0.5 Q8.6 0.9 8.4 4.4 Z" fill="#f0a24e"/></g><g transform="translate(55.20 397.60)"><path d="M1 -4 H5.2 L7.4 -1.9 V4 H1 Z" fill="#f2f6fb" stroke="#a9b6c6" stroke-width="0.6"/><rect x="1.6" y="-3" width="2.5" height="6.4" fill="#a6cbec"/><path d="M5.2 -4 V-1.9 H7.4" fill="none" stroke="#a9b6c6" stroke-width="0.6"/><path d="M4.7 4.4 Q4.5 0.8 6.4 0.5 Q8.6 0.9 8.4 4.4 Z" fill="#f0a24e"/></g><g transform="translate(55.20 408.20)"><path d="M1 -4 H5.2 L7.4 -1.9 V4 H1 Z" fill="#f2f6fb" stroke="#a9b6c6" stroke-width="0.6"/><rect x="1.6" y="-3" width="2.5" height="6.4" fill="#a6cbec"/><path d="M5.2 -4 V-1.9 H7.4" fill="none" stroke="#a9b6c6" stroke-width="0.6"/><path d="M4.7 4.4 Q4.5 0.8 6.4 0.5 Q8.6 0.9 8.4 4.4 Z" fill="#f0a24e"/></g><g transform="translate(44.90 418.80)"><path d="M0.5 -2.2 Q0.5 -3.4 1.6 -3.4 H3.4 L4.4 -2.4 H7.3 Q8 -2.4 8 -1.6 V2.4 H0.5 Z" fill="#f9d488" stroke="#e5942c" stroke-width="0.8"/><path d="M1.8 -0.6 H9 L8 3.6 H0.6 Z" fill="#fde3a8" stroke="#e89a36" stroke-width="0.8" stroke-linejoin="round"/></g><g transform="translate(44.90 418.80)"><rect x="5.4" y="0.6" width="4.4" height="4.4" fill="#2a1a14"/><rect x="7" y="2.2" width="1.3" height="1.3" fill="#fff"/></g><g transform="translate(44.90 429.50)"><path d="M0.5 -2.2 Q0.5 -3.4 1.6 -3.4 H3.4 L4.4 -2.4 H7.3 Q8 -2.4 8 -1.6 V2.4 H0.5 Z" fill="#f9d488" stroke="#e5942c" stroke-width="0.8"/><path d="M1.8 -0.6 H9 L8 3.6 H0.6 Z" fill="#fde3a8" stroke="#e89a36" stroke-width="0.8" stroke-linejoin="round"/></g><g transform="translate(38.30 68.60)"><path d="M0 -2.7 L4.3 0 L0 2.7 Z" fill="#8fb0e0"/></g><g transform="translate(38.30 79.20)"><path d="M0 -2.7 L4.3 0 L0 2.7 Z" fill="#7c7c7c"/></g><g transform="translate(38.30 89.80)"><path d="M0 -2.7 L4.3 0 L0 2.7 Z" fill="#7c7c7c"/></g><g transform="translate(38.30 100.50)"><path d="M-0.2 -2.3 H5 L2.4 2.4 Z" fill="#7c7c7c"/></g><g transform="translate(38.30 280.90)"><path d="M0 -2.7 L4.3 0 L0 2.7 Z" fill="#7c7c7c"/></g><g transform="translate(38.30 291.50)"><path d="M0 -2.7 L4.3 0 L0 2.7 Z" fill="#7c7c7c"/></g><g transform="translate(38.30 302.10)"><path d="M-0.2 -2.3 H5 L2.4 2.4 Z" fill="#7c7c7c"/></g><g transform="translate(48.60 312.70)"><path d="M-0.2 -2.3 H5 L2.4 2.4 Z" fill="#7c7c7c"/></g><g transform="translate(38.30 418.80)"><path d="M0 -2.7 L4.3 0 L0 2.7 Z" fill="#7c7c7c"/></g><g transform="translate(38.30 429.50)"><path d="M0 -2.7 L4.3 0 L0 2.7 Z" fill="#7c7c7c"/></g><g transform="translate(278.20 56.80)"><rect x="0.3" y="-2.1" width="4.2" height="4.2" fill="#f4f8fc" stroke="#9ab0c8" stroke-width="0.6"/><path d="M1.2 0 H3.6" stroke="#5f7f9f" stroke-width="0.7"/></g><g transform="translate(278.20 85.00)"><rect x="0.3" y="-2.1" width="4.2" height="4.2" fill="#f4f8fc" stroke="#9ab0c8" stroke-width="0.6"/><path d="M1.2 0 H3.6" stroke="#5f7f9f" stroke-width="0.7"/></g><g transform="translate(278.20 141.30)"><rect x="0.3" y="-2.1" width="4.2" height="4.2" fill="#f4f8fc" stroke="#9ab0c8" stroke-width="0.6"/><path d="M1.2 0 H3.6" stroke="#5f7f9f" stroke-width="0.7"/></g></svg>
</div>
<div id="strip"></div>
<div id="box"></div>
<div id="ttl">Declarative Syntax Definition</div>
<div id="sub">SDF and ATerms</div>
<div id="auth">Guido Wachsmuth</div>
<div id="foot"></div>
<div id="band"></div><div id="bandline"></div>
<div id="ctf">Challenge the future</div>
<div class="fr" style="top:436.3px;font-size:8.83px">Course IN4303 2013/14</div>
<div class="fr" style="top:447.6px;font-size:8.7px">Compiler Construction</div>
<svg style="left:36px;top:430px" width="110" height="30" viewBox="36 430 110 30"><path d="M54 433.1 C50 434 45.3 435.9 43.6 438.6 C42.6 440.2 42.8 441.7 43.3 442.4 C43.8 440.7 45 439.5 46.6 438.8 L48.8 437.8 L47 440.7 L49.8 440.2 L48.3 443.6 C50.4 442.2 52 440.5 52.7 438.7 L50.5 439.4 L51.8 436.5 L49.8 437 C50.8 435.6 52.3 434.2 54 433.1 Z" fill="#0a0a0a" stroke="#0a0a0a" stroke-width="0.9" stroke-linejoin="round"/><text x="39.9" y="455.9" font-family="Liberation Sans, sans-serif" font-size="16.2" font-weight="bold" fill="#0a0a0a" stroke="#0a0a0a" stroke-width="0.45">T</text><text x="50.9" y="455.9" font-family="Liberation Sans, sans-serif" font-size="16.2" font-weight="bold" fill="#1a97d8" stroke="#1a97d8" stroke-width="0.45">U</text><text x="64.6" y="455.9" font-family="Liberation Sans, sans-serif" font-size="16.2" fill="#0a0a0a" stroke="#0a0a0a" stroke-width="0.3" letter-spacing="0.45">Delft</text><text font-family="Liberation Sans, sans-serif" font-size="4.5" fill="#111"><tspan x="110.2" y="447">Delft</tspan><tspan x="110.2" y="451.7">University of</tspan><tspan x="110.2" y="456.4">Technology</tspan></text></svg>
</body></html>
